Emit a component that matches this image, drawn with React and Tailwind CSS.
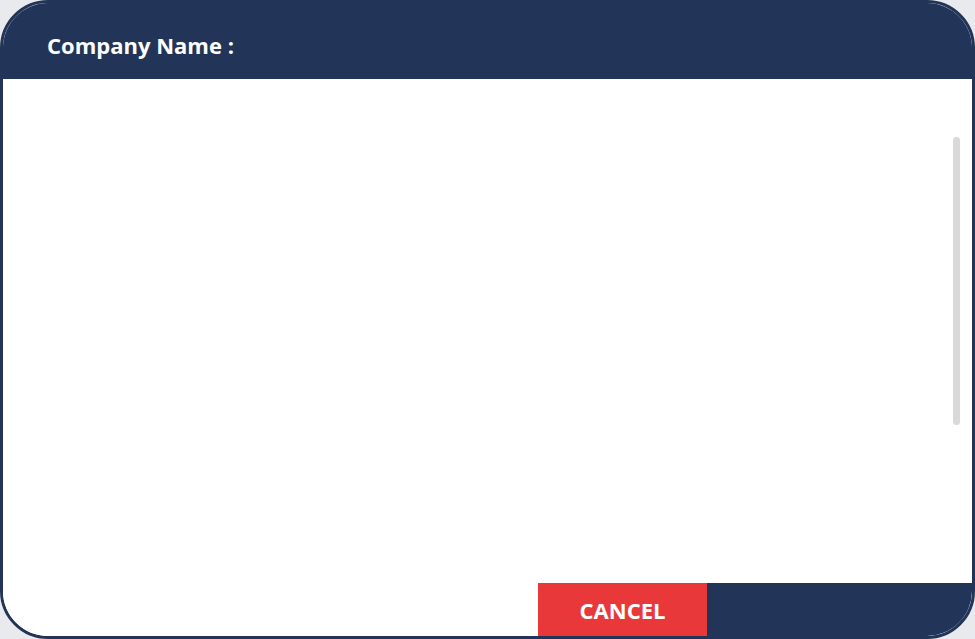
export default function App() {
  return (
    <div className="w-[975px] h-[639px] bg-[#e9eaee]" style={{ fontFamily: '"Open Sans", "Noto Sans", sans-serif' }}>
      <div className="w-full h-full flex flex-col border-[3px] border-[#223558] rounded-[48px] overflow-hidden bg-white">
        <div className="h-[76px] shrink-0 bg-[#223558] flex items-center pl-[44px] pt-[7px]">
          <span className="text-white font-bold text-[22px] leading-none">Company Name :</span>
        </div>
        <div className="flex-1 flex justify-end pt-[58px] pr-[12px]">
          <div className="w-[7px] h-[288px] rounded-full bg-[#d9d9d9]"></div>
        </div>
        <div className="h-[53px] shrink-0 flex">
          <div className="w-[535px] bg-white"></div>
          <button className="w-[169px] bg-[#e9383a] text-white font-bold text-[22px] flex items-center justify-center pt-[2px]">CANCEL</button>
          <div className="flex-1 bg-[#223558]"></div>
        </div>
      </div>
    </div>
  );
}
